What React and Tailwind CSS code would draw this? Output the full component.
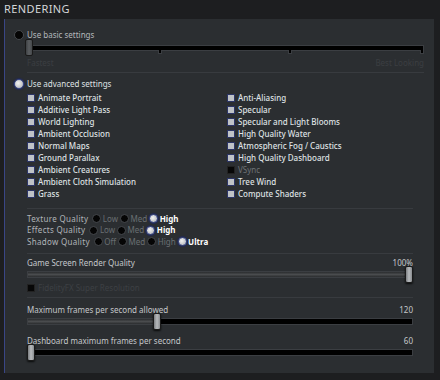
import React from 'react';

const LEFT = [
  'Animate Portrait',
  'Additive Light Pass',
  'World Lighting',
  'Ambient Occlusion',
  'Normal Maps',
  'Ground Parallax',
  'Ambient Creatures',
  'Ambient Cloth Simulation',
  'Grass',
];

const RIGHT = [
  { label: 'Anti-Aliasing' },
  { label: 'Specular' },
  { label: 'Specular and Light Blooms' },
  { label: 'High Quality Water' },
  { label: 'Atmospheric Fog / Caustics' },
  { label: 'High Quality Dashboard' },
  { label: 'VSync', off: true },
  { label: 'Tree Wind' },
  { label: 'Compute Shaders' },
];

const QUALITY = [
  { label: 'Texture Quality', options: ['Low', 'Med', 'High'], value: 'High' },
  { label: 'Effects Quality', options: ['Low', 'Med', 'High'], value: 'High' },
  { label: 'Shadow Quality', options: ['Off', 'Med', 'High', 'Ultra'], value: 'Ultra' },
];

function Radio({ on, big }) {
  const size = big ? 'w-[10px] h-[10px]' : 'w-[9px] h-[9px]';
  return on ? (
    <span className={`${size} rounded-full border border-[#3b4a8f] bg-[radial-gradient(circle_at_40%_40%,#f2f2f2,#a9acb0)] shadow-[0_0_1px_1px_#222a55] shrink-0`} />
  ) : (
    <span className={`${size} rounded-full border border-[#46494d] bg-[#050505] shrink-0`} />
  );
}

function Check({ label, off }) {
  return (
    <div className="h-[12px] flex items-center gap-[3px]">
      {off ? (
        <span className="w-[8px] h-[8px] border border-[#222] bg-[#070707] shrink-0" />
      ) : (
        <span className="w-[8px] h-[8px] border border-[#2c3566] bg-[#bfc3c7] shrink-0" />
      )}
      <span className={off ? 'text-[#6e7276]' : 'text-[#dfe1e3] font-medium'}>{label}</span>
    </div>
  );
}

function Divider({ wide }) {
  return <div className={wide ? 'h-px bg-[#383b3f] mr-[10px]' : 'h-px bg-[#383b3f] mr-[21px]'} />;
}

function Slider({ pct }) {
  return (
    <div className="relative h-[7px] mr-[21px]">
      <div className="absolute inset-0 bg-black border border-[#3b3e42]">
        <div
          className="h-full bg-[linear-gradient(#2a2c2e,#4a4c4e,#2a2c2e)]"
          style={{ width: pct + '%' }}
        />
      </div>
      <div
        className="absolute top-[-5px] w-[8px] h-[17px] rounded-[2px] border border-[#1a1a1a] bg-[linear-gradient(90deg,#7c7f82,#b7babd,#8a8d90)] shadow-[0_1px_2px_rgba(0,0,0,0.8)]"
        style={{ left: `calc(${pct}% - ${pct / 100 * 8}px)` }}
      />
    </div>
  );
}

export default function App() {
  return (
    <div className="w-[440px] h-[380px] bg-[#1d1e20] overflow-hidden font-['Noto_Sans',sans-serif] text-[8px] leading-[12px]">
      <div className="h-[19px] pl-[4px] pt-[2px] text-[11px] leading-[14px] tracking-[0.4px] text-[#d4d6d8]">
        RENDERING
      </div>
      <div className="ml-[4px] w-[430px] h-[354px] bg-[#2b2e31] border-l border-[#3a4686] pl-[9px] flex flex-col">
        <div className="mt-[10px] h-[12px] flex items-center gap-[3px] text-[#b4b8bc]">
          <Radio big />
          <span>Use basic settings</span>
        </div>
        <div className="ml-[13px] mt-[4px]">
          <div className="relative h-[6px] mr-[10px]">
            <div className="absolute inset-0 bg-black border border-[#3b3e42]" />
            <span className="absolute left-[131px] top-[5px] w-[4px] h-[4px] bg-black border border-[#3b3e42] border-t-0" />
            <span className="absolute left-[261px] top-[5px] w-[4px] h-[4px] bg-black border border-[#3b3e42] border-t-0" />
            <span className="absolute right-0 top-[5px] w-[4px] h-[4px] bg-black border border-[#3b3e42] border-t-0" />
            <div className="absolute left-[-2px] top-[-6px] w-[8px] h-[17px] rounded-[2px] border border-[#1a1a1a] bg-[linear-gradient(90deg,#3e4144,#5a5d60,#45484b)]" />
          </div>
          <div className="flex justify-between mr-[10px] mt-[6px] h-[12px] text-[#3b3e42]">
            <span>Fastest</span>
            <span>Best Looking</span>
          </div>
        </div>
        <div className="ml-[13px] mt-[3px]">
          <Divider wide />
        </div>
        <div className="mt-[5px] h-[12px] flex items-center gap-[3px] text-[#dfe1e3]">
          <Radio on big />
          <span>Use advanced settings</span>
        </div>
        <div className="ml-[13px] mt-[2px] grid grid-cols-[200px_1fr]">
          <div className="flex flex-col">
            {LEFT.map((l) => (
              <Check key={l} label={l} />
            ))}
          </div>
          <div className="flex flex-col">
            {RIGHT.map((r) => (
              <Check key={r.label} label={r.label} off={r.off} />
            ))}
          </div>
        </div>
        <div className="ml-[13px] mt-[8px]">
          <Divider />
        </div>
        <div className="ml-[13px] mt-[4px] flex flex-col">
          {QUALITY.map((q) => (
            <div key={q.label} className="h-[11.5px] flex items-center">
              <span className="text-[#b0b4b8] mr-[4px] tracking-[0.3px]">{q.label}</span>
              {q.options.map((o) => (
                <span key={o} className="flex items-center gap-[1.5px] mr-[2px]">
                  <Radio on={o === q.value} />
                  <span className={o === q.value ? 'text-white font-bold' : 'text-[#6a6e72]'}>{o}</span>
                </span>
              ))}
            </div>
          ))}
        </div>
        <div className="ml-[13px] mt-[5px]">
          <Divider />
        </div>
        <div className="ml-[13px] mt-[3px] flex justify-between mr-[21px] text-[#c4c7ca]">
          <span>Game Screen Render Quality</span>
          <span>100%</span>
        </div>
        <div className="ml-[13px] mt-[2px]">
          <Slider pct={100} />
        </div>
        <div className="ml-[13px] mt-[4px] h-[12px] flex items-center gap-[3px] text-[#3d4044]">
          <span className="w-[8px] h-[8px] border border-[#222] bg-[#070707]" />
          <span>FidelityFX Super Resolution</span>
        </div>
        <div className="ml-[13px] mt-[3px]">
          <Divider />
        </div>
        <div className="ml-[13px] mt-[6px] flex justify-between mr-[21px] text-[#c4c7ca]">
          <span>Maximum frames per second allowed</span>
          <span>120</span>
        </div>
        <div className="ml-[13px] mt-[2px]">
          <Slider pct={33.3} />
        </div>
        <div className="ml-[13px] mt-[10px] flex justify-between mr-[21px] text-[#c4c7ca]">
          <span>Dashboard maximum frames per second</span>
          <span>60</span>
        </div>
        <div className="ml-[13px] mt-[2px]">
          <Slider pct={0} />
        </div>
      </div>
    </div>
  );
}
